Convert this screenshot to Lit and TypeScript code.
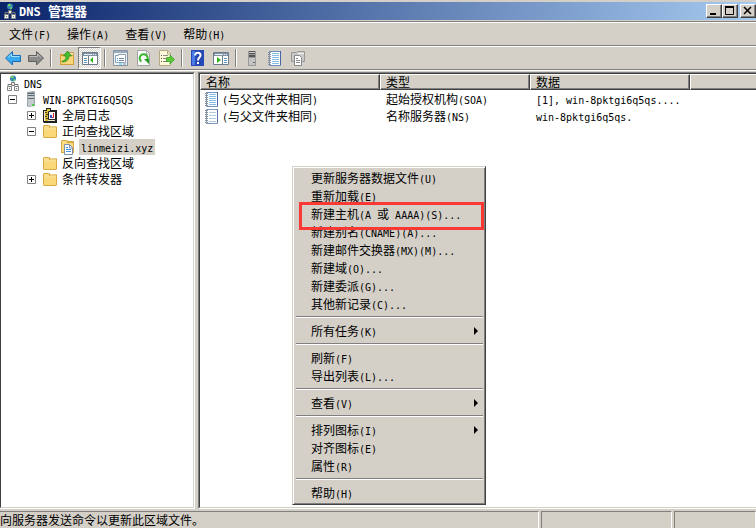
import { LitElement, html, css, svg, nothing } from "lit";
import { customElement, property } from "lit/decorators.js";
import { classMap } from "lit/directives/class-map.js";

/* Latin runs are set half as wide as the ideographs, as in a bitmap UI font. */
const mixed = (text: string) =>
  text
    .split(/([\x20-\x7e]+)/)
    .filter((run) => run.length > 0)
    .map((run) => (/^[\x20-\x7e]/.test(run) ? html`<span class="latin">${run}</span>` : run));

const textStyles = css`
  .latin {
    font-family: "DejaVu Sans Mono", monospace;
    font-size: 10px;
    line-height: 1;
    white-space: pre;
  }
  .icon {
    flex: none;
  }
  button {
    font: inherit;
    color: inherit;
    margin: 0;
    padding: 0;
    border: 0;
    background: none;
    text-align: left;
  }
`;

const ICONS: Record<string, unknown> = {
  dns: svg`
    <path d="M9 7v3M4 11V9.500H14V11" fill="none" stroke="#777" />
    <circle cx="9" cy="3.500" r="3" fill="#2f83b8" />
    <path d="M7 1.500l2-.8 1 1.600-2 1.200-1-.6zM9 4.500l2-.6v1.600l-1.500 1z" fill="#7ed657" />
    <path d="M7.500 7.500h3v3h-3z" fill="#eee" stroke="#777" />
    <path d="M3.500 11.500h4v4h-4zM10.500 11.500h4v4h-4z" fill="#f3f3f3" stroke="#858585" />
    <path d="M5 13.500h1M12 13.500h1" stroke="#777" />`,
  server: svg`
    <path d="M4 1l7-1 1 1v14l-7 1-1-1z" fill="#9aa3a8" />
    <path d="M5 2h6v13H5z" fill="#c3cbd0" />
    <path d="M5 2.500h6M5 4.500h6M5 7.500h6" stroke="#5c686f" />
    <path d="M9 13h2v2H9z" fill="#45d23b" />`,
  graysrv: svg`
    <path d="M4 1h8v15H4z" fill="#9a9a9a" />
    <path d="M5 1h6v3H5zM5 5h6v2H5z" fill="#555" />
    <path d="M5 2.500h6" stroke="#d0d0d0" />
    <path d="M5 8h6v7H5z" fill="#c4c4c4" />
    <path d="M9 12h2v1H9z" fill="#666" />`,
  folder: svg`
    <path d="M1 3l1-1h5l1 1h6l1 1v10l-1 1H2l-1-1z" fill="#d9a943" />
    <path d="M2 3h5v2h7v9H2z" fill="#f9df8c" />
    <path d="M2 7h12v7H2z" fill="#fbd879" />
    <path d="M8 4h6" stroke="#fff3bd" />`,
  zone: svg`
    <path d="M0 2l1-1h5l1 1h6v12H0z" fill="#d9a943" />
    <path d="M1 2h5v2h6v9H1z" fill="#fadc84" />
    <path d="M3.500 5.500h5l3 3v7h-8z" fill="#fff" stroke="#7d8fae" />
    <path d="M8.500 6v3h3" fill="none" stroke="#7d8fae" />
    <path d="M5 8.500h2M5 10.500h5M5 12.500h5" stroke="#3f94e6" />`,
  log: svg`
    <path d="M1 3h3V1h5v2h6v13H2l-1-1z" fill="#222" />
    <path d="M2 4h11v10H2z" fill="#eee9cf" />
    <path d="M3 4h3v10H3z" fill="#d8bd35" />
    <path d="M5 2h3v2H5z" fill="#d8d230" />
    <path d="M3 5.500h2M4 7.500h2M3 9.500h2M4 11.500h2" stroke="#4a401b" />
    <path d="M6.500 4.500h7v8h-7z" fill="#fff" stroke="#222" />
    <path d="M8 8h2v3H8z" fill="#3450d6" />
    <path d="M11.500 6v4.500H10" fill="none" stroke="#e02020" />`,
  note: svg`
    <path d="M2.500 1.500h11v14h-11z" fill="#fdfeff" stroke="#6f8fbe" />
    <path d="M13.500 1v14" stroke="#4766a8" />
    <path d="M5 3.500h7M5 5.500h7M5 7.500h7M5 9.500h7M5 11.500h7M5 13.500h7" stroke="#86bce2" />
    <path d="M1 2.500h3M1 4.500h3M1 6.500h3M1 8.500h3M1 10.500h3M1 12.500h3M1 14.500h3" stroke="#8b9199" />`,
  noteplain: svg`
    <path d="M2.500 1.500h11v14h-11z" fill="#fdfeff" stroke="#8296ba" />
    <path d="M13.500 1v14" stroke="#5a6ea8" />
    <path d="M5 4.500h7M5 7.500h7M5 10.500h7M5 13.500h7" stroke="#b5cadb" />
    <path d="M1 2.500h3M1 4.500h3M1 6.500h3M1 8.500h3M1 10.500h3M1 12.500h3M1 14.500h3" stroke="#8b9199" />`,
  back: svg`
    <path d="M.5 8L7.500 1.500V5.500H15.500V11.500H7.500V15z" fill="#38a9ee" stroke="#1b6bb4" />
    <path d="M3 7.500L6.500 4V6.500H14.500" fill="none" stroke="#a4e2ff" />`,
  forward: svg`
    <path d="M15.500 8L8.500 1.500V5.500H.5V11.500H8.500V15z" fill="#8b8b8b" stroke="#5e5e5e" />
    <path d="M1.500 6.500H9.500V4L13 7.500" fill="none" stroke="#bdbdbd" />`,
  up: svg`
    <path d="M1 4h5l1 1h8v10H1z" fill="#d29f3b" />
    <path d="M2 6h12v8H2z" fill="#fbd57a" />
    <path d="M9.500 2.500h5v3h-5z" fill="#f7e0a0" stroke="#c8a050" />
    <path d="M3 11c3 0 4-2 4-5H4.500L8.500 1l4 5H10c0 4-3 6-7 6z" fill="#45bf2c" stroke="#23891b" stroke-width=".7" />`,
  tree: svg`
    <path d="M.5 2.500h15v12H.5z" fill="#fff" stroke="#6c7b8c" />
    <path d="M1 3h14v3H1z" fill="#8393a5" />
    <path d="M2 4.500h8M11 4.500h1M13 4.500h1" stroke="#e9eef4" />
    <path d="M6.500 6v8" stroke="#6c7b8c" />
    <path d="M2 8.500h3M2 10.500h3M2 12.500h3" stroke="#5d91bf" />
    <path d="M11 7v6L8 10z" fill="#2fb41b" />`,
  panel: svg`
    <path d="M.5 2.500h15v12H.5z" fill="#fff" stroke="#6c7b8c" />
    <path d="M1 3h14v3H1z" fill="#8393a5" />
    <path d="M2 4.500h8M11 4.500h1M13 4.500h1" stroke="#e9eef4" />
    <path d="M9.500 6v8" stroke="#6c7b8c" />
    <path d="M11 8.500h3M11 10.500h3M11 12.500h3" stroke="#5d91bf" />
    <path d="M4 7v6l4-3z" fill="#2fb41b" />`,
  props: svg`
    <path d="M.5.5h14v15H.5z" fill="#eef2f6" stroke="#8593a4" />
    <path d="M1 2h13" stroke="#9cabbc" stroke-width="2" />
    <path d="M2.500 5.500h3v-1h7v8h-10z" fill="#fff" stroke="#8fa0b3" />
    <path d="M4 8.500h1M4 10.500h1" stroke="#2ea4ee" />
    <path d="M6 8.500h5M6 10.500h5" stroke="#708398" />
    <path d="M6 14h3" stroke="#34c3ff" /><path d="M10 14h3" stroke="#8593a4" />`,
  refresh: svg`
    <path d="M1.500.5h9l3 3v12h-12z" fill="#fbfbfb" stroke="#a4a4a4" />
    <path d="M10.500 1v3h3" fill="none" stroke="#aaa" />
    <path d="M5.500 11.500A4 4 0 1 1 10.500 11" fill="none" stroke="#35b52c" stroke-width="2" />
    <path d="M8 9h5v5z" fill="#219b1e" />`,
  exportlist: svg`
    <path d="M.5.5h8l3 3v12H.5z" fill="#fff8d9" stroke="#b4a783" />
    <path d="M8.500 1v3h3" fill="none" stroke="#b4a783" />
    <path d="M2 5.500h1M2 8.500h1M2 11.500h1" stroke="#555" />
    <path d="M4 5.500h5M4 8.500h4M4 11.500h5" stroke="#8a8a8a" />
    <path d="M7.500 7.500h3.500V5l4.500 4.500-4.500 4.500v-2.500H7.500z" fill="#5bcb35" stroke="#2b9a22" stroke-width=".7" />`,
  help: svg`
    <path d="M1 0h13v16H1z" fill="#2449b5" />
    <path d="M2 1h3v14H2z" fill="#4b7be8" />
    <path d="M5.200 5.500C5.200 1.500 11 2 10.500 5.500 10.300 7.500 8 7.500 8 10.500" fill="none" stroke="#fff" stroke-width="2" />
    <path d="M7 12h2v2H7z" fill="#fff" />`,
  copy: svg`
    <path d="M1.500 2.500h5l1-1h7v10h-13z" fill="#c9c9c9" stroke="#999" />
    <path d="M8 3.500h6" stroke="#f4f4f4" />
    <path d="M4.500 5.500h5l2 2v8h-7z" fill="#fff" stroke="#888" />
    <path d="M6 8.500h2M6 10.500h4M6 12.500h4" stroke="#888" />`,
};

const icon = (name: string) =>
  html`<svg class="icon" width="16" height="16" viewBox="0 0 16 16" aria-hidden="true">${ICONS[name]}</svg>`;

@customElement("title-bar")
class TitleBar extends LitElement {
  static styles = [
    textStyles,
    css`
      :host {
        display: flex;
        align-items: center;
        height: 18px;
        margin-top: 2px;
        padding-left: 1px;
        background: linear-gradient(to right, #0a246a, #a6caf0);
        color: #fff;
      }
      h1 {
        flex: 1;
        margin: 0 0 0 2px;
        font-size: 13px;
        line-height: 18px;
        font-weight: bold;
      }
      h1 .latin {
        font-size: 12px;
      }
      .caption {
        display: flex;
        align-items: center;
        justify-content: center;
        width: 16px;
        height: 14px;
        background: #d4d0c8;
        border: 1px solid;
        border-color: #fff #404040 #404040 #fff;
        box-shadow: inset -1px -1px #808080;
        box-sizing: border-box;
      }
      .close {
        margin-left: 2px;
      }
    `,
  ];
  render() {
    return html`
      ${icon("dns")}
      <h1>${mixed("DNS 管理器")}</h1>
      <button class="caption" aria-label="最小化">
        <svg width="12" height="10"><path d="M2 8h6" stroke="#000" stroke-width="2" /></svg>
      </button>
      <button class="caption" aria-label="最大化">
        <svg width="12" height="10"><path d="M1.500 1v7.500h8V1" fill="none" stroke="#000" /><path d="M1 1h9" stroke="#000" stroke-width="2" /></svg>
      </button>
      <button class="caption close" aria-label="关闭">
        <svg width="12" height="10"><path d="M2 1l7 7M9 1L2 8" stroke="#000" stroke-width="1.500" /></svg>
      </button>
    `;
  }
}

@customElement("tool-bar")
class ToolBar extends LitElement {
  static styles = [
    textStyles,
    css`
      :host {
        display: flex;
        height: 22px;
        padding-left: 1px;
      }
      .tool {
        display: flex;
        align-items: center;
        justify-content: center;
        width: 23px;
        height: 22px;
        box-sizing: border-box;
      }
      .pressed {
        border: 1px solid;
        border-color: #808080 #fff #fff #808080;
        background: repeating-conic-gradient(#fff 0 25%, #d4d0c8 0 50%) 0 0 / 2px 2px;
      }
      .divider {
        height: 18px;
        margin: 2px 3px;
        border-left: 1px solid #808080;
        border-right: 1px solid #fff;
      }
    `,
  ];
  private tools = [
    ["back", "后退"], ["forward", "前进"], null,
    ["up", "上移"], ["tree", "显示控制台树"], null,
    ["props", "属性"], ["refresh", "刷新"], ["exportlist", "导出列表"], null,
    ["help", "帮助"], ["panel", "显示操作窗格"], null,
    ["graysrv", "新建服务器"], ["note", "新建记录"], ["copy", "新建区域"],
  ];
  render() {
    return this.tools.map((tool) =>
      tool
        ? html`<button class=${classMap({ tool: true, pressed: tool[0] === "tree" })} aria-label=${tool[1]}>${icon(tool[0])}</button>`
        : html`<span class="divider"></span>`
    );
  }
}

interface Node {
  label: string;
  icon: string;
  open?: boolean;
  selected?: boolean;
  children?: Node[];
}

@customElement("console-tree")
class ConsoleTree extends LitElement {
  static styles = [
    textStyles,
    css`
      ul {
        list-style: none;
        margin: 0;
        padding: 0;
      }
      .root {
        padding: 1px 0 0 3px;
      }
      .level1 {
        padding-left: 4px;
      }
      .level2,
      .level3 {
        padding-left: 19px;
      }
      .row {
        display: flex;
        align-items: center;
        height: 16px;
      }
      .toggle,
      .blank {
        width: 9px;
        height: 9px;
        margin-right: 6px;
        flex: none;
      }
      .toggle {
        display: block;
      }
      .label {
        margin-left: 2px;
        padding: 0 2px;
        line-height: 16px;
        white-space: nowrap;
      }
      .selected {
        background: #d4d0c8;
      }
    `,
  ];
  private tree: Node = {
    label: "DNS",
    icon: "dns",
    open: true,
    children: [
      {
        label: "WIN-8PKTGI6Q5QS",
        icon: "server",
        open: true,
        children: [
          { label: "全局日志", icon: "log", open: false },
          {
            label: "正向查找区域",
            icon: "folder",
            open: true,
            children: [{ label: "linmeizi.xyz", icon: "zone", selected: true }],
          },
          { label: "反向查找区域", icon: "folder" },
          { label: "条件转发器", icon: "folder", open: false },
        ],
      },
    ],
  };
  private toggle(node: Node) {
    node.open = !node.open;
    this.requestUpdate();
  }
  private node(node: Node, depth: number): unknown {
    const box =
      depth === 0
        ? nothing
        : node.open === undefined
        ? html`<span class="blank"></span>`
        : html`<button class="toggle" aria-label=${node.label} @click=${() => this.toggle(node)}>
            <svg width="9" height="9" style="display:block">
              <path d="M.5.5h8v8h-8z" fill="#fff" stroke="#808080" />
              <path d=${node.open ? "M2 4.500h5" : "M2 4.500h5M4.500 2v5"} stroke="#000" />
            </svg>
          </button>`;
    return html`<li>
      <div class="row">
        ${box}${icon(node.icon)}<button class=${classMap({ label: true, selected: !!node.selected })}>${mixed(node.label)}</button>
      </div>
      ${node.children && node.open
        ? html`<ul class=${"level" + (depth + 1)}>${node.children.map((child) => this.node(child, depth + 1))}</ul>`
        : nothing}
    </li>`;
  }
  render() {
    return html`<ul class="root">${this.node(this.tree, 0)}</ul>`;
  }
}

@customElement("record-list")
class RecordList extends LitElement {
  static styles = [
    textStyles,
    css`
      table {
        width: 100%;
        table-layout: fixed;
        border-spacing: 0;
      }
      .c1 {
        width: 180px;
      }
      .c2 {
        width: 150px;
      }
      .c3 {
        width: 160px;
      }
      th {
        height: 16px;
        box-sizing: border-box;
        padding: 0 0 0 5px;
        line-height: 14px;
        font-weight: normal;
        text-align: left;
        background: #d4d0c8;
        border: 1px solid;
        border-color: #fff #404040 #404040 #fff;
        box-shadow: inset -1px -1px #808080;
      }
      .rest {
        border-right: 0;
        box-shadow: inset 0 -1px #808080;
      }
      td {
        height: 17px;
        padding: 0 0 0 6px;
        line-height: 17px;
        white-space: nowrap;
      }
      .name {
        display: flex;
        align-items: center;
        gap: 2px;
        margin-left: -2px;
      }
    `,
  ];
  private rows = [
    ["note", "(与父文件夹相同)", "起始授权机构(SOA)", "[1], win-8pktgi6q5qs...."],
    ["noteplain", "(与父文件夹相同)", "名称服务器(NS)", "win-8pktgi6q5qs."],
  ];
  render() {
    return html`<table>
      <thead>
        <tr>
          <th class="c1">名称</th>
          <th class="c2">类型</th>
          <th class="c3">数据</th>
          <th class="rest"></th>
        </tr>
      </thead>
      <tbody>
        ${this.rows.map(
          (row) => html`<tr>
            <td><div class="name">${icon(row[0])}<span>${mixed(row[1])}</span></div></td>
            <td>${mixed(row[2])}</td>
            <td>${mixed(row[3])}</td>
            <td></td>
          </tr>`
        )}
      </tbody>
    </table>`;
  }
}

@customElement("context-menu")
class ContextMenu extends LitElement {
  static styles = [
    textStyles,
    css`
      :host {
        display: flex;
        flex-direction: column;
        box-sizing: border-box;
        width: 194px;
        padding: 2px;
        background: #d4d0c8;
        border: 1px solid;
        border-color: #d4d0c8 #404040 #404040 #d4d0c8;
        box-shadow: inset 1px 1px #fff, inset -1px -1px #808080;
      }
      .item {
        position: relative;
        display: flex;
        align-items: center;
        justify-content: space-between;
        height: 18px;
        line-height: 18px;
        padding: 0 5px 0 16px;
        white-space: pre;
      }
      .arrow {
        border: 4px solid transparent;
        border-left-color: #000;
        border-right-width: 0;
      }
      .line {
        height: 0;
        margin: 3px 0 4px 1px;
        border: 0;
        border-top: 1px solid #808080;
        border-bottom: 1px solid #fff;
      }
      .marked::after {
        content: "";
        position: absolute;
        z-index: 1;
        inset: -3px -1px -7px 4px;
        border: 3px solid #fb3934;
      }
    `,
  ];
  @property() marked = "";
  private groups = [
    [
      "更新服务器数据文件(U)", "重新加载(E)", "新建主机(A 或 AAAA)(S)...", "新建别名(CNAME)(A)...",
      "新建邮件交换器(MX)(M)...", "新建域(O)...", "新建委派(G)...", "其他新记录(C)...",
    ],
    ["所有任务(K)>"],
    ["刷新(F)", "导出列表(L)..."],
    ["查看(V)>"],
    ["排列图标(I)>", "对齐图标(E)", "属性(R)"],
    ["帮助(H)"],
  ];
  render() {
    return this.groups.map(
      (group, index) => html`${index ? html`<hr class="line" />` : nothing}${group.map((entry) => {
        const label = entry.replace(">", "");
        return html`<button class=${classMap({ item: true, marked: label === this.marked })} role="menuitem"><span>${mixed(label)}</span>${label === entry ? nothing : html`<span class="arrow"></span>`}</button>`;
      })}`
    );
  }
}

@customElement("app-root")
class AppRoot extends LitElement {
  static styles = [
    textStyles,
    css`
      :host {
        position: relative;
        display: flex;
        flex-direction: column;
        height: 100vh;
        overflow: hidden;
        background: #d4d0c8;
        color: #000;
        font-family: "Noto Sans CJK SC", sans-serif;
        font-size: 12px;
      }
      .band {
        border-top: 1px solid #808080;
        box-shadow: inset 0 1px #fff;
        padding-top: 1px;
      }
      .menubar {
        display: flex;
        gap: 16px;
        height: 22px;
        margin-top: 1px;
        padding-left: 9px;
      }
      .menubar button {
        line-height: 22px;
      }
      .panes {
        flex: 1;
        min-height: 0;
        display: grid;
        grid-template-columns: 195px 1fr;
        gap: 3px;
        padding: 2px 0;
      }
      .pane {
        min-width: 0;
        overflow: hidden;
        background: #fff;
        border: 1px solid;
        border-color: #404040 #d4d0c8 #d4d0c8 #404040;
      }
      .frame {
        display: grid;
        min-width: 0;
        border-top: 1px solid #808080;
        border-bottom: 1px solid #fff;
      }
      .left {
        border-right: 1px solid #fff;
      }
      .right {
        border-left: 1px solid #808080;
      }
      .right .pane {
        border-right: 0;
      }
      .status {
        display: grid;
        grid-template-columns: 1fr 131px 82px;
        gap: 2px;
        height: 17px;
      }
      .cell {
        border: 1px solid #808080;
        border-right-color: #fff;
        border-bottom: 0;
        line-height: 16px;
        white-space: nowrap;
      }
      .message {
        border-left: 0;
      }
      .popup {
        position: absolute;
        left: 292px;
        top: 166px;
      }
    `,
  ];
  render() {
    return html`
      <title-bar></title-bar>
      <nav class="band menubar">
        ${["文件(F)", "操作(A)", "查看(V)", "帮助(H)"].map((name) => html`<button>${mixed(name)}</button>`)}
      </nav>
      <div class="band"><tool-bar></tool-bar></div>
      <div class="band panes">
        <div class="frame left"><div class="pane"><console-tree></console-tree></div></div>
        <div class="frame right"><div class="pane"><record-list></record-list></div></div>
      </div>
      <footer class="status">
        <div class="cell message">向服务器发送命令以更新此区域文件。</div>
        <div class="cell"></div>
        <div class="cell"></div>
      </footer>
      <context-menu class="popup" role="menu" marked="新建主机(A 或 AAAA)(S)..."></context-menu>
    `;
  }
}
